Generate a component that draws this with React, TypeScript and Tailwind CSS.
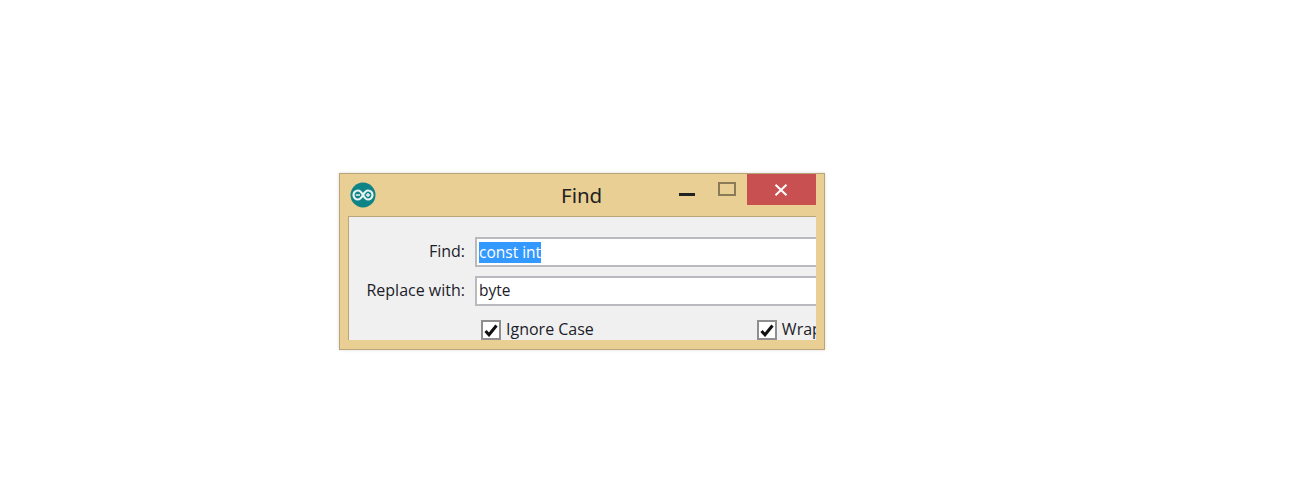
import React from "react";

function ArduinoLogo() {
  return (
    <svg width="26" height="26" viewBox="0 0 26 26" className="shrink-0">
      <circle cx="13" cy="13" r="12.5" fill="#0f8487" />
      <path d="M8 8.5a4.5 4.5 0 1 0 0 9c2.2 0 3.6-2 5-4.5 1.4-2.5 2.8-4.5 5-4.5a4.5 4.5 0 1 1 0 9c-2.2 0-3.6-2-5-4.5-1.4-2.5-2.8-4.5-5-4.5Z" fill="none" stroke="#e8f3f2" strokeWidth="2.2" />
      <path d="M5.8 13h4.2M15.9 13h4.2M18 11v4" stroke="#e8f3f2" strokeWidth="1.4" fill="none" />
    </svg>
  );
}

function Check({ label }: { label: string }) {
  return (
    <div className="flex items-start gap-[5px]">
      <div className="flex h-[20px] w-[20px] shrink-0 items-center justify-center border-2 border-[#8f8f8f] bg-white">
        <svg width="14" height="13" viewBox="0 0 14 13">
          <path d="M1.5 7 5 10.8 12.5 1.5" fill="none" stroke="#111" strokeWidth="3" />
        </svg>
      </div>
      <span className="-mt-[1px] text-[16px] leading-[20px] whitespace-nowrap text-[#1c1c2a]">{label}</span>
    </div>
  );
}

function Field({ label, children }: { label: string; children: React.ReactNode }) {
  return (
    <div className="flex items-center">
      <div className="-mt-[2px] w-[116px] shrink-0 text-right text-[16px] whitespace-nowrap text-[#1c1c2a]">{label}</div>
      <div className="ml-[10px] flex h-[30px] w-[400px] shrink-0 items-center border-2 border-[#b9b9c0] bg-white pl-[2px] text-[15.5px] text-[#1c1c2a]">
        {children}
      </div>
    </div>
  );
}

export default function App() {
  return (
    <div className="h-[488px] w-[1315px] overflow-hidden bg-white pt-[173px] pl-[339px] font-['Open_Sans','Noto_Sans',sans-serif]">
      <div className="h-[177px] w-[486px] border border-[#b9a578] bg-[#e9cf94] shadow-[0_0_3px_rgba(0,0,0,0.15)]">
        <div className="flex h-[42px] items-start pr-[8px] pl-[10px]">
          <div className="mt-[8px]">
            <ArduinoLogo />
          </div>
          <div className="mt-[6px] ml-[185px] w-[40px] text-center font-['Noto_Sans',sans-serif] text-[20.5px] leading-[30px] text-[#222]">Find</div>
          <div className="mt-[19px] ml-[78px] h-[3px] w-[16px] bg-[#222]" />
          <div className="mt-[8px] ml-[23px] h-[14px] w-[18px] border-2 border-[#8a7a58]" />
          <div className="ml-[11px] flex h-[31px] w-[69px] shrink-0 items-center justify-center bg-[#c85050] pr-[2px]">
            <svg width="14" height="12" viewBox="0 0 14 12">
              <path d="M1.5 0.8 12.5 11.2M12.5 0.8 1.5 11.2" stroke="#fff" strokeWidth="2" />
            </svg>
          </div>
        </div>
        <div className="ml-[8px] h-[124px] w-[468px] overflow-hidden border-t border-l border-[#b9a578] bg-[#f0f0f0] pt-[20px]">
          <div className="flex flex-col gap-[9px]">
            <Field label="Find:">
              <span className="bg-[#3399ff] leading-[21px] text-white">const int</span>
            </Field>
            <Field label="Replace with:">
              <span>byte</span>
            </Field>
          </div>
          <div className="mt-[14px] ml-[132px] flex gap-[163px]">
            <Check label="Ignore Case" />
            <Check label="Wrap" />
          </div>
        </div>
      </div>
    </div>
  );
}
